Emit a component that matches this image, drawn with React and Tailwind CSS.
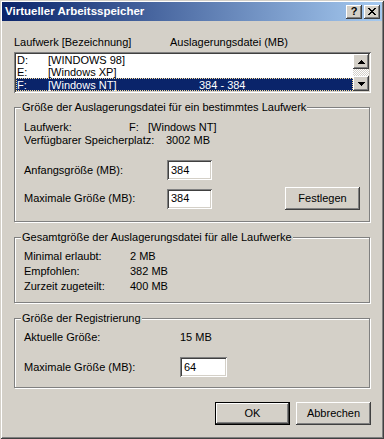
import React from "react";

const raised =
  "shadow-[inset_-1px_-1px_0_#404040,inset_1px_1px_0_#ffffff,inset_-2px_-2px_0_#808080,inset_2px_2px_0_#d4d0c8]";
const sunken =
  "shadow-[inset_1px_1px_0_#808080,inset_-1px_-1px_0_#ffffff,inset_2px_2px_0_#404040,inset_-2px_-2px_0_#d4d0c8]";

function CloseGlyph() {
  const px = [
    [0, 0], [1, 0], [6, 0], [7, 0],
    [1, 1], [2, 1], [5, 1], [6, 1],
    [2, 2], [3, 2], [4, 2], [5, 2],
    [3, 3], [4, 3],
    [2, 4], [3, 4], [4, 4], [5, 4],
    [1, 5], [2, 5], [5, 5], [6, 5],
    [0, 6], [1, 6], [6, 6], [7, 6],
  ];
  return (
    <svg width="8" height="7" viewBox="0 0 8 7" shapeRendering="crispEdges">
      {px.map(([x, y], i) => (
        <rect key={i} x={x} y={y} width="1" height="1" fill="#000" />
      ))}
    </svg>
  );
}

function Arrow({ up }) {
  return (
    <svg width="7" height="4" viewBox="0 0 7 4" shapeRendering="crispEdges">
      {up ? (
        <>
          <rect x="3" y="0" width="1" height="1" fill="#000" />
          <rect x="2" y="1" width="3" height="1" fill="#000" />
          <rect x="1" y="2" width="5" height="1" fill="#000" />
          <rect x="0" y="3" width="7" height="1" fill="#000" />
        </>
      ) : (
        <>
          <rect x="0" y="0" width="7" height="1" fill="#000" />
          <rect x="1" y="1" width="5" height="1" fill="#000" />
          <rect x="2" y="2" width="3" height="1" fill="#000" />
          <rect x="3" y="3" width="1" height="1" fill="#000" />
        </>
      )}
    </svg>
  );
}

function Group({ title, className, children }) {
  return (
    <div
      className={`relative mr-[1px] border border-[#808080] shadow-[1px_1px_0_#ffffff,inset_1px_1px_0_#ffffff] ${className}`}
    >
      <span className="absolute -top-[7px] left-[6px] bg-[#d4d0c8] px-[1px] leading-[13px] whitespace-nowrap">
        {title}
      </span>
      {children}
    </div>
  );
}

function Field({ value, w }) {
  return (
    <div className={`${w} h-[20px] bg-white ${sunken} flex items-center pl-[4px] leading-[13px]`}>
      {value}
    </div>
  );
}

function Button({ children, def }) {
  const cls = def
    ? "shadow-[inset_0_0_0_1px_#000000,inset_-2px_-2px_0_#404040,inset_2px_2px_0_#ffffff,inset_-3px_-3px_0_#808080]"
    : raised;
  return (
    <div className={`w-[75px] h-[23px] bg-[#d4d0c8] ${cls} flex items-center justify-center leading-[13px]`}>
      {children}
    </div>
  );
}

export default function App() {
  const rows = [
    { d: "D:", n: "[WINDOWS 98]", s: "", h: "h-[12px]" },
    { d: "E:", n: "[Windows XP]", s: "", h: "h-[12px]" },
    { d: "F:", n: "[Windows NT]", s: "384 - 384", h: "h-[13px]", sel: true },
  ];
  return (
    <div className="w-[384px] h-[439px] bg-[#d4d0c8] p-[2px] flex flex-col font-['Liberation_Sans',Arial,sans-serif] text-[11px] text-black shadow-[inset_1px_1px_0_#d4d0c8,inset_-1px_-1px_0_#404040,inset_2px_2px_0_#ffffff,inset_-2px_-2px_0_#808080]">
      {/* Title bar */}
      <div className="h-[19px] shrink-0 flex items-center justify-between pl-[3px] pr-[2px] bg-[linear-gradient(to_right,#0a246a,#a6caf0)]">
        <span className="text-white font-bold text-[11.5px] leading-[13px] whitespace-nowrap">
          Virtueller Arbeitsspeicher
        </span>
        <div className="flex gap-[2px]">
          <div className={`w-[16px] h-[14px] bg-[#d4d0c8] ${raised} flex items-center justify-center font-bold text-[11px] leading-[11px] pb-[1px]`}>
            ?
          </div>
          <div className={`w-[16px] h-[14px] bg-[#d4d0c8] ${raised} flex items-center justify-center pb-[1px]`}>
            <CloseGlyph />
          </div>
        </div>
      </div>

      {/* Content */}
      <div className="flex flex-col pl-[12px] pr-[11px]">
        <div className="mt-[15px] flex leading-[13px] whitespace-nowrap">
          <span className="w-[156px]">Laufwerk [Bezeichnung]</span>
          <span>Auslagerungsdatei (MB)</span>
        </div>

        <div className={`mt-[3px] h-[41px] p-[2px] bg-white ${sunken} flex`}>
          <div className="flex-1 flex flex-col">
            {rows.map((r) => (
              <div
                key={r.d}
                className={`${r.h} flex items-center leading-[12px] whitespace-nowrap border border-dotted ${
                  r.sel ? "bg-[#0a246a] text-white border-[#f5db95]" : "border-transparent"
                }`}
              >
                <span className="w-[31px]">{r.d}</span>
                <span className="w-[151px]">{r.n}</span>
                <span>{r.s}</span>
              </div>
            ))}
          </div>
          <div className="w-[16px] flex flex-col">
            <div className={`h-[15px] bg-[#d4d0c8] ${raised} flex items-center justify-center`}>
              <Arrow up />
            </div>
            <div className="flex-1 bg-[repeating-conic-gradient(#d4d0c8_0_25%,#ffffff_0_50%)] bg-[length:2px_2px]" />
            <div className={`h-[15px] bg-[#d4d0c8] ${raised} flex items-center justify-center`}>
              <Arrow />
            </div>
          </div>
        </div>

        {/* Group 1 */}
        <Group title="Größe der Auslagerungsdatei für ein bestimmtes Laufwerk" className="mt-[14px] h-[115px] pt-[13px] pl-[9px] pr-[9px]">
          <div className="flex leading-[13px] whitespace-nowrap">
            <span className="w-[105px]">Laufwerk:</span>
            <span className="w-[19px]">F:</span>
            <span>[Windows NT]</span>
          </div>
          <div className="flex leading-[13px] whitespace-nowrap">
            <span className="w-[142px]">Verfügbarer Speicherplatz:</span>
            <span>3002 MB</span>
          </div>
          <div className="mt-[13px] h-[20px] flex items-center leading-[13px] whitespace-nowrap">
            <span className="w-[143px]">Anfangsgröße (MB):</span>
            <Field value="384" w="w-[45px]" />
          </div>
          <div className="mt-[7px] h-[23px] flex items-center leading-[13px] whitespace-nowrap">
            <span className="w-[143px]">Maximale Größe (MB):</span>
            <Field value="384" w="w-[45px]" />
            <div className="ml-auto">
              <Button>Festlegen</Button>
            </div>
          </div>
        </Group>

        {/* Group 2 */}
        <Group title="Gesamtgröße der Auslagerungsdatei für alle Laufwerke" className="mt-[15px] h-[66px] pt-[11px] pl-[9px]">
          {[
            ["Minimal erlaubt:", "2 MB"],
            ["Empfohlen:", "382 MB"],
            ["Zurzeit zugeteilt:", "400 MB"],
          ].map(([a, b]) => (
            <div key={a} className="flex leading-[15px] whitespace-nowrap">
              <span className="w-[106px]">{a}</span>
              <span>{b}</span>
            </div>
          ))}
        </Group>

        {/* Group 3 */}
        <Group title="Größe der Registrierung" className="mt-[15px] h-[70px] pt-[12px] pl-[9px]">
          <div className="flex leading-[13px] whitespace-nowrap">
            <span className="w-[156px]">Aktuelle Größe:</span>
            <span>15 MB</span>
          </div>
          <div className="mt-[13px] h-[20px] flex items-center leading-[13px] whitespace-nowrap">
            <span className="w-[156px]">Maximale Größe (MB):</span>
            <Field value="64" w="w-[47px]" />
          </div>
        </Group>

        {/* Buttons */}
        <div className="mt-[14px] flex justify-end gap-[6px]">
          <Button def>OK</Button>
          <Button>Abbrechen</Button>
        </div>
      </div>
    </div>
  );
}
